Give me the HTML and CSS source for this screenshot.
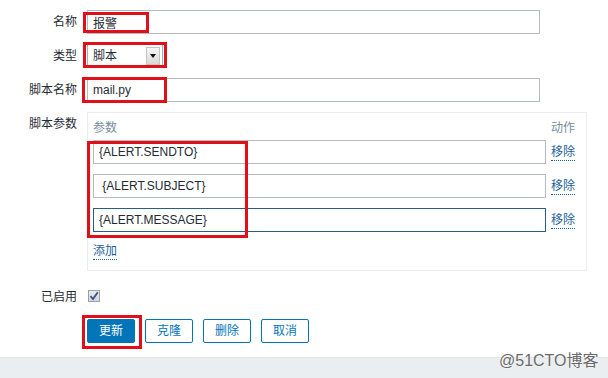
FILE: index.html
```html
<!DOCTYPE html>
<html lang="zh">
<head>
<meta charset="utf-8">
<title>媒体类型</title>
<link rel="stylesheet" href="styles.css">
</head>
<body>
<div class="page">
  <form class="form">
    <div class="row">
      <label class="lbl">名称</label>
      <div class="ctl"><input class="text" type="text" value="报警"></div>
    </div>
    <div class="row">
      <label class="lbl">类型</label>
      <div class="ctl">
        <div class="select"><span class="select-val">脚本</span><span class="select-btn"><span class="tri"></span></span></div>
      </div>
    </div>
    <div class="row">
      <label class="lbl">脚本名称</label>
      <div class="ctl"><input class="text" type="text" value="mail.py"></div>
    </div>
    <div class="row">
      <label class="lbl">脚本参数</label>
      <div class="ctl">
        <div class="params">
          <div class="prow head"><span class="pcell">参数</span><span class="act">动作</span></div>
          <div class="plist">
            <div class="prow"><input class="text" type="text" value="{ALERT.SENDTO}"><a class="link" href="#">移除</a></div>
            <div class="prow"><input class="text" type="text" value=" {ALERT.SUBJECT}"><a class="link" href="#">移除</a></div>
            <div class="prow"><input class="text focus" type="text" value="{ALERT.MESSAGE}"><a class="link" href="#">移除</a></div>
          </div>
          <div class="add"><a class="link" href="#">添加</a></div>
        </div>
      </div>
    </div>
    <div class="row check-row">
      <label class="lbl">已启用</label>
      <div class="ctl"><span class="checkbox"><svg width="10" height="10" viewBox="0 0 10 10"><path d="M1.5 5.2 L4 8 L8.8 1.2" fill="none" stroke="#3d4f8a" stroke-width="1.8"/></svg></span></div>
    </div>
    <div class="row btn-row">
      <span></span>
      <div class="buttons">
        <button class="btn primary" type="button">更新</button>
        <button class="btn" type="button">克隆</button>
        <button class="btn" type="button">删除</button>
        <button class="btn" type="button">取消</button>
      </div>
    </div>
  </form>
  <footer class="footer"></footer>

  <div class="mark m-name"></div>
  <div class="mark m-type"></div>
  <div class="mark m-script"></div>
  <div class="mark m-params"></div>
  <div class="mark m-btn"></div>
  <div class="watermark">@51CTO博客</div>
</div>
</body>
</html>
```
FILE: styles.css
```css
html, body {
  margin: 0;
  padding: 0;
  background: #ffffff;
}
body {
  font-family: "Liberation Sans", "Noto Sans CJK SC", sans-serif;
  font-size: 12px;
  color: #1f2c33;
}
.page {
  position: relative;
  width: 608px;
  height: 378px;
  overflow: hidden;
}
.form {
  margin: 0;
  padding-top: 10px;
  display: flex;
  flex-direction: column;
  gap: 10px;
}
.row {
  display: grid;
  grid-template-columns: 77px 1fr;
  column-gap: 10px;
  align-items: start;
}
.lbl {
  text-align: right;
  line-height: 24px;
  height: 24px;
  white-space: nowrap;
}
.ctl {
  display: flex;
}
.text {
  box-sizing: border-box;
  width: 453px;
  height: 24px;
  margin: 0;
  padding: 0 5px;
  border: 1px solid #b6bbbe;
  border-radius: 0;
  background: #ffffff;
  font-family: "Liberation Sans", "Noto Sans CJK SC", sans-serif;
  font-size: 12px;
  color: #1f2c33;
  outline: none;
}
.text.focus {
  border-color: #24607f;
}
.select {
  box-sizing: border-box;
  width: 76px;
  height: 24px;
  border: 1px solid #a9adb0;
  display: flex;
  align-items: center;
  justify-content: space-between;
  padding: 2px 2px 2px 5px;
  background: #fff;
}
.select-val {
  line-height: 20px;
}
.select-btn {
  box-sizing: border-box;
  width: 14px;
  height: 18px;
  border: 1px solid #c4c4c4;
  background: linear-gradient(#f7f7f7, #d9d9d9);
  display: flex;
  align-items: center;
  justify-content: center;
}
.tri {
  width: 0;
  height: 0;
  border-left: 3.5px solid transparent;
  border-right: 3.5px solid transparent;
  border-top: 4px solid #111;
}
.params {
  box-sizing: border-box;
  width: 500px;
  height: 159px;
  border: 1px solid #ebeef0;
  padding: 4px 10px 8px 5px;
  display: flex;
  flex-direction: column;
}
.prow {
  display: flex;
  align-items: center;
  gap: 5px;
}
.prow.head {
  height: 23px;
  align-items: flex-start;
  line-height: 22px;
  color: #768d99;
}
.pcell {
  width: 453px;
}
.act {
  color: #768d99;
}
.plist {
  display: flex;
  flex-direction: column;
  gap: 10px;
}
.prow .link {
  margin-top: 2px;
}
.link {
  color: #1c5f95;
  text-decoration: none;
  border-bottom: 1px dotted #1c5f95;
  line-height: 15px;
}
.add {
  margin-top: 12px;
  line-height: 18px;
  display: flex;
}
.check-row {
  margin-top: 4px;
}
.check-row .lbl {
  padding-top: 1px;
  height: 23px;
  line-height: 23px;
}
.checkbox {
  box-sizing: border-box;
  width: 12px;
  height: 12px;
  margin: 5px 0 0 1px;
  border: 1px solid #9aa2a8;
  background: linear-gradient(#e6e9f0, #d3d7e0);
  display: flex;
  align-items: center;
  justify-content: center;
}
.buttons {
  display: flex;
  gap: 10px;
}
.btn {
  box-sizing: border-box;
  width: 48px;
  height: 24px;
  margin: 0;
  padding: 0;
  border: 1px solid #0275b8;
  border-radius: 2px;
  background: #ffffff;
  color: #0275b8;
  font-family: "Liberation Sans", "Noto Sans CJK SC", sans-serif;
  font-size: 12px;
  line-height: 22px;
}
.btn.primary {
  background: #0275b8;
  color: #ffffff;
}
.footer {
  position: absolute;
  left: 0;
  right: 0;
  top: 357px;
  bottom: 0;
  background: #ebeef1;
  border-top: 1px solid #e2e6e9;
}
.mark {
  position: absolute;
  box-sizing: border-box;
  border: 3px solid #e0101b;
}
.m-name { left: 83px; top: 12px; width: 66px; height: 21px; }
.m-type { left: 83px; top: 42px; width: 84px; height: 26px; }
.m-script { left: 82px; top: 77px; width: 85px; height: 26px; }
.m-params { left: 87px; top: 141px; width: 161px; height: 97px; }
.m-btn { left: 82px; top: 315px; width: 60px; height: 34px; }
.watermark {
  position: absolute;
  left: 499px;
  top: 351px;
  font-family: "Liberation Sans", "Noto Sans CJK SC", sans-serif;
  font-size: 16px;
  line-height: 20px;
  color: #6a6a6a;
  white-space: nowrap;
  text-shadow: 0 0 2px #ffffff;
}
```
